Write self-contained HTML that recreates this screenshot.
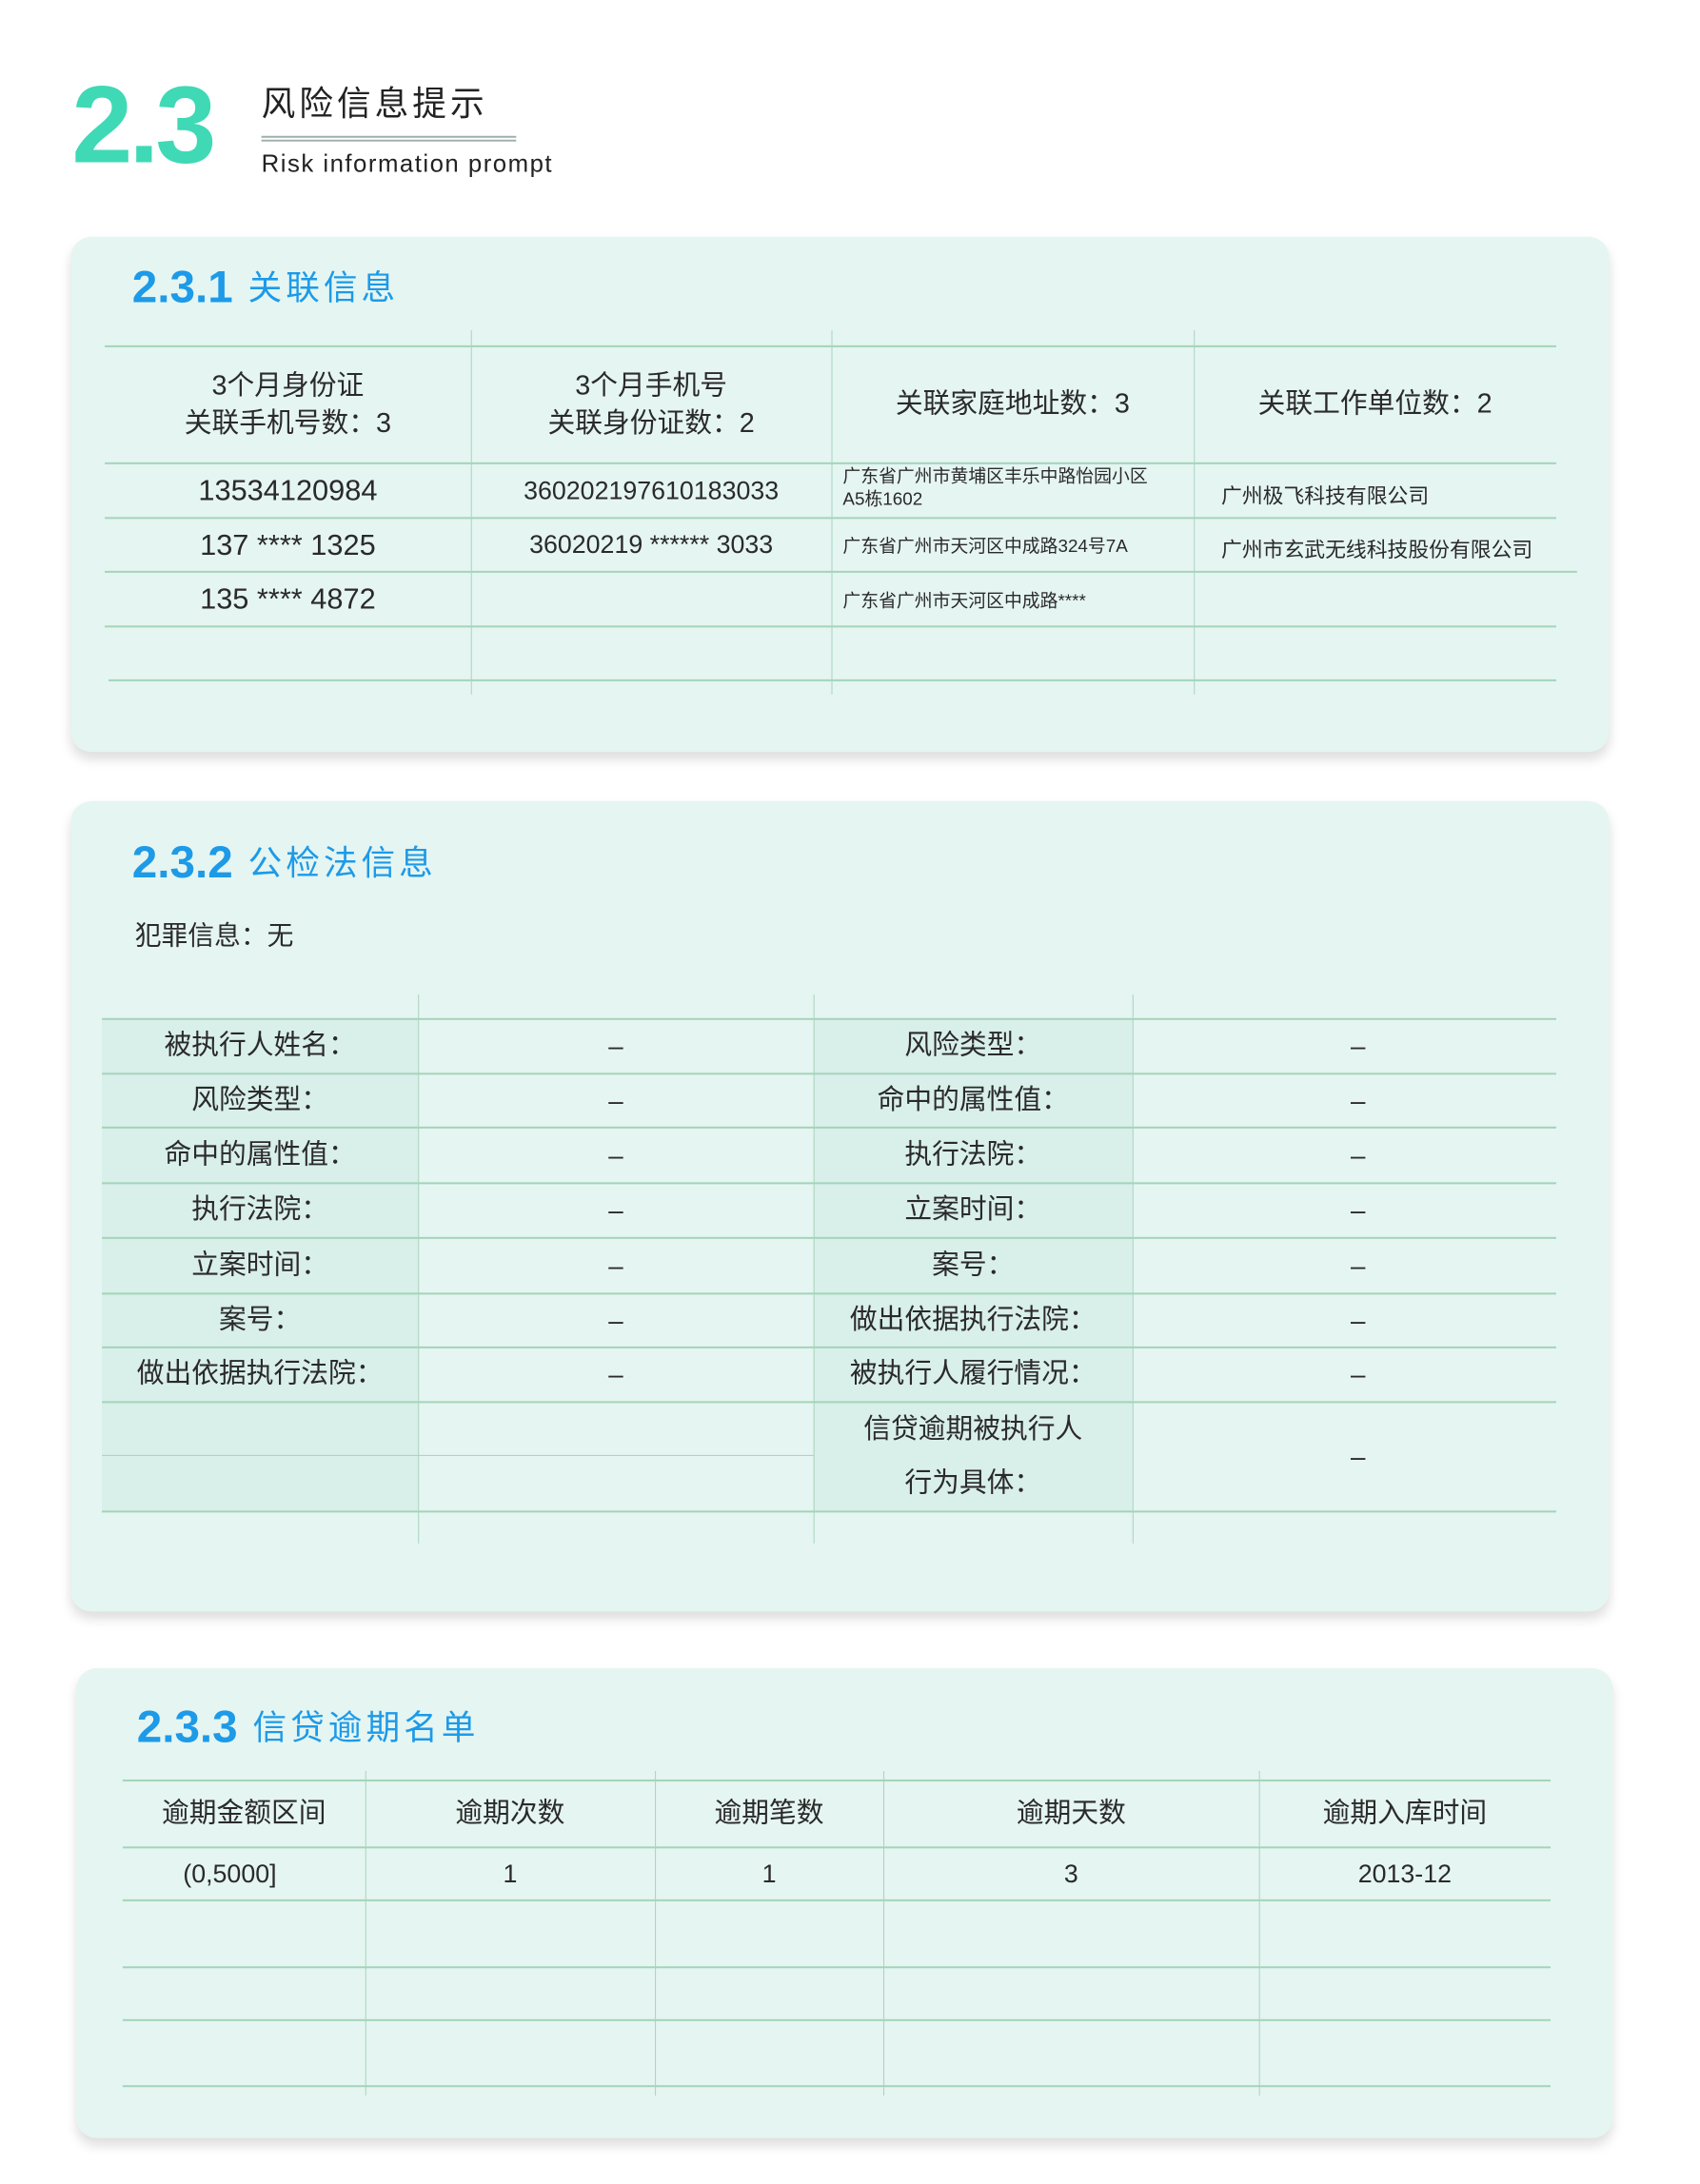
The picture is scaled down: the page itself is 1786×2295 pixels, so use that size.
<!DOCTYPE html>
<html><head><meta charset="utf-8">
<style>
*{margin:0;padding:0;box-sizing:border-box}
body{width:1786px;height:2295px;background:#fff;position:relative;overflow:hidden;font-family:"Liberation Sans","Noto Sans CJK SC",sans-serif;color:#2a2a2a}
#w{position:absolute;left:0;top:0;width:1786px;height:2295px;transform:scale(0.9915);transform-origin:0 0}
.a{position:absolute}
.card{position:absolute;background:#e5f5f1;border-radius:22px;box-shadow:0 8px 12px rgba(0,0,0,0.13)}
.h{position:absolute;height:2px;background:#a3d4b9}
.v{position:absolute;width:1px;background:#a9d3bd}
.c{position:absolute;display:flex;align-items:center;justify-content:center;text-align:center;line-height:1.35}
.sh{position:absolute;background:#d9efea}
.t{position:absolute;color:#1d9ae8;white-space:nowrap}
.t b{font-size:48px;font-weight:bold;letter-spacing:0px}
.t span{font-size:36px;letter-spacing:4px;margin-left:16px;vertical-align:3px}
</style></head><body><div id="w">

<div class="a" style="left:76px;top:74px;font-size:116px;font-weight:bold;color:#3fd9b5;letter-spacing:-4px;line-height:1">2.3</div>
<div class="a" style="left:277px;top:88px;font-size:36px;letter-spacing:4px;color:#222;line-height:1.2">风险信息提示</div>
<div class="a" style="left:277px;top:144px;width:270px;height:2px;background:#9fb0ad"></div>
<div class="a" style="left:277px;top:148px;width:270px;height:2px;background:#9fb0ad"></div>
<div class="a" style="left:277px;top:158px;font-size:26px;letter-spacing:1.5px;color:#222">Risk information prompt</div>

<!-- Card 1 -->
<div class="card" style="left:75px;top:251px;width:1630px;height:546px"></div>
<div class="t" style="left:140px;top:276px"><b>2.3.1</b><span>关联信息</span></div>
<div class="h" style="left:111px;top:366px;width:1538px"></div>
<div class="h" style="left:111px;top:490px;width:1538px"></div>
<div class="h" style="left:111px;top:548px;width:1538px"></div>
<div class="h" style="left:111px;top:605px;width:1560px"></div>
<div class="h" style="left:111px;top:663px;width:1538px"></div>
<div class="h" style="left:115px;top:720px;width:1534px"></div>
<div class="v" style="left:499px;top:350px;height:386px"></div>
<div class="v" style="left:881px;top:350px;height:386px"></div>
<div class="v" style="left:1265px;top:350px;height:386px"></div>
<div class="c" style="left:111px;top:368px;width:388px;height:122px;font-size:29px;line-height:40px">3个月身份证<br>关联手机号数：3</div>
<div class="c" style="left:499px;top:368px;width:382px;height:122px;font-size:29px;line-height:40px">3个月手机号<br>关联身份证数：2</div>
<div class="c" style="left:881px;top:368px;width:384px;height:122px;font-size:29px">关联家庭地址数：3</div>
<div class="c" style="left:1265px;top:368px;width:384px;height:122px;font-size:29px">关联工作单位数：2</div>
<div class="c" style="left:111px;top:492px;width:388px;height:56px;font-size:31px">13534120984</div>
<div class="c" style="left:111px;top:550px;width:388px;height:55px;font-size:31px">137 **** 1325</div>
<div class="c" style="left:111px;top:607px;width:388px;height:56px;font-size:31px">135 **** 4872</div>
<div class="c" style="left:499px;top:492px;width:382px;height:56px;font-size:27px">360202197610183033</div>
<div class="c" style="left:499px;top:550px;width:382px;height:55px;font-size:27px">36020219 ****** 3033</div>
<div class="a" style="left:893px;top:494px;font-size:19px;line-height:24px">广东省广州市黄埔区丰乐中路怡园小区<br>A5栋1602</div>
<div class="a" style="left:893px;top:564px;font-size:19px">广东省广州市天河区中成路324号7A</div>
<div class="a" style="left:893px;top:622px;font-size:19px">广东省广州市天河区中成路****</div>
<div class="a" style="left:1294px;top:508px;font-size:22px">广州极飞科技有限公司</div>
<div class="a" style="left:1294px;top:565px;font-size:22px">广州市玄武无线科技股份有限公司</div>

<!-- Card 2 -->
<div class="card" style="left:75px;top:849px;width:1630px;height:859px"></div>
<div class="t" style="left:140px;top:886px"><b>2.3.2</b><span>公检法信息</span></div>
<div class="a" style="left:143px;top:970px;font-size:28px">犯罪信息：无</div>
<div class="sh" style="left:108px;top:1079px;width:335px;height:522px"></div>
<div class="sh" style="left:862px;top:1079px;width:338px;height:522px"></div>
<div class="h" style="left:108px;top:1079px;width:1541px"></div>
<div class="h" style="left:108px;top:1137px;width:1541px"></div>
<div class="h" style="left:108px;top:1194px;width:1541px"></div>
<div class="h" style="left:108px;top:1253px;width:1541px"></div>
<div class="h" style="left:108px;top:1311px;width:1541px"></div>
<div class="h" style="left:108px;top:1370px;width:1541px"></div>
<div class="h" style="left:108px;top:1427px;width:1541px"></div>
<div class="h" style="left:108px;top:1485px;width:1541px"></div>
<div class="h" style="left:108px;top:1542px;width:754px;height:1px"></div>
<div class="h" style="left:108px;top:1601px;width:1541px"></div>
<div class="v" style="left:443px;top:1054px;height:582px"></div>
<div class="v" style="left:862px;top:1054px;height:582px"></div>
<div class="v" style="left:1200px;top:1054px;height:582px"></div>

<div class="c" style="left:108px;top:1081px;width:335px;height:56px;font-size:29px">被执行人姓名：</div>
<div class="c" style="left:108px;top:1139px;width:335px;height:55px;font-size:29px">风险类型：</div>
<div class="c" style="left:108px;top:1196px;width:335px;height:57px;font-size:29px">命中的属性值：</div>
<div class="c" style="left:108px;top:1255px;width:335px;height:56px;font-size:29px">执行法院：</div>
<div class="c" style="left:108px;top:1313px;width:335px;height:57px;font-size:29px">立案时间：</div>
<div class="c" style="left:108px;top:1372px;width:335px;height:55px;font-size:29px">案号：</div>
<div class="c" style="left:108px;top:1429px;width:335px;height:56px;font-size:29px">做出依据执行法院：</div>

<div class="c" style="left:862px;top:1081px;width:338px;height:56px;font-size:29px">风险类型：</div>
<div class="c" style="left:862px;top:1139px;width:338px;height:55px;font-size:29px">命中的属性值：</div>
<div class="c" style="left:862px;top:1196px;width:338px;height:57px;font-size:29px">执行法院：</div>
<div class="c" style="left:862px;top:1255px;width:338px;height:56px;font-size:29px">立案时间：</div>
<div class="c" style="left:862px;top:1313px;width:338px;height:57px;font-size:29px">案号：</div>
<div class="c" style="left:862px;top:1372px;width:338px;height:55px;font-size:29px">做出依据执行法院：</div>
<div class="c" style="left:862px;top:1429px;width:338px;height:56px;font-size:29px">被执行人履行情况：</div>
<div class="c" style="left:862px;top:1487px;width:338px;height:114px;font-size:29px;line-height:57px">信贷逾期被执行人<br>行为具体：</div>

<div class="c" style="left:443px;top:1081px;width:419px;height:56px;font-size:28px">–</div>
<div class="c" style="left:443px;top:1139px;width:419px;height:55px;font-size:28px">–</div>
<div class="c" style="left:443px;top:1196px;width:419px;height:57px;font-size:28px">–</div>
<div class="c" style="left:443px;top:1255px;width:419px;height:56px;font-size:28px">–</div>
<div class="c" style="left:443px;top:1313px;width:419px;height:57px;font-size:28px">–</div>
<div class="c" style="left:443px;top:1372px;width:419px;height:55px;font-size:28px">–</div>
<div class="c" style="left:443px;top:1429px;width:419px;height:56px;font-size:28px">–</div>
<div class="c" style="left:1200px;top:1081px;width:478px;height:56px;font-size:28px">–</div>
<div class="c" style="left:1200px;top:1139px;width:478px;height:55px;font-size:28px">–</div>
<div class="c" style="left:1200px;top:1196px;width:478px;height:57px;font-size:28px">–</div>
<div class="c" style="left:1200px;top:1255px;width:478px;height:56px;font-size:28px">–</div>
<div class="c" style="left:1200px;top:1313px;width:478px;height:57px;font-size:28px">–</div>
<div class="c" style="left:1200px;top:1372px;width:478px;height:55px;font-size:28px">–</div>
<div class="c" style="left:1200px;top:1429px;width:478px;height:56px;font-size:28px">–</div>
<div class="c" style="left:1200px;top:1487px;width:478px;height:114px;font-size:28px">–</div>

<!-- Card 3 -->
<div class="card" style="left:81px;top:1768px;width:1628px;height:498px"></div>
<div class="t" style="left:145px;top:1802px"><b>2.3.3</b><span>信贷逾期名单</span></div>
<div class="h" style="left:130px;top:1886px;width:1513px"></div>
<div class="h" style="left:130px;top:1957px;width:1513px"></div>
<div class="h" style="left:130px;top:2013px;width:1513px"></div>
<div class="h" style="left:130px;top:2084px;width:1513px"></div>
<div class="h" style="left:130px;top:2140px;width:1513px"></div>
<div class="h" style="left:130px;top:2210px;width:1513px"></div>
<div class="v" style="left:387px;top:1877px;height:344px"></div>
<div class="v" style="left:694px;top:1877px;height:344px"></div>
<div class="v" style="left:936px;top:1877px;height:344px"></div>
<div class="v" style="left:1334px;top:1877px;height:344px"></div>
<div class="c" style="left:130px;top:1888px;width:257px;height:69px;font-size:29px">逾期金额区间</div>
<div class="c" style="left:387px;top:1888px;width:307px;height:69px;font-size:29px">逾期次数</div>
<div class="c" style="left:694px;top:1888px;width:242px;height:69px;font-size:29px">逾期笔数</div>
<div class="c" style="left:936px;top:1888px;width:398px;height:69px;font-size:29px">逾期天数</div>
<div class="c" style="left:1334px;top:1888px;width:309px;height:69px;font-size:29px">逾期入库时间</div>
<div class="c" style="left:115px;top:1959px;width:257px;height:54px;font-size:27px">(0,5000]</div>
<div class="c" style="left:387px;top:1959px;width:307px;height:54px;font-size:27px">1</div>
<div class="c" style="left:694px;top:1959px;width:242px;height:54px;font-size:27px">1</div>
<div class="c" style="left:936px;top:1959px;width:398px;height:54px;font-size:27px">3</div>
<div class="c" style="left:1334px;top:1959px;width:309px;height:54px;font-size:27px">2013-12</div>

</div></body></html>
